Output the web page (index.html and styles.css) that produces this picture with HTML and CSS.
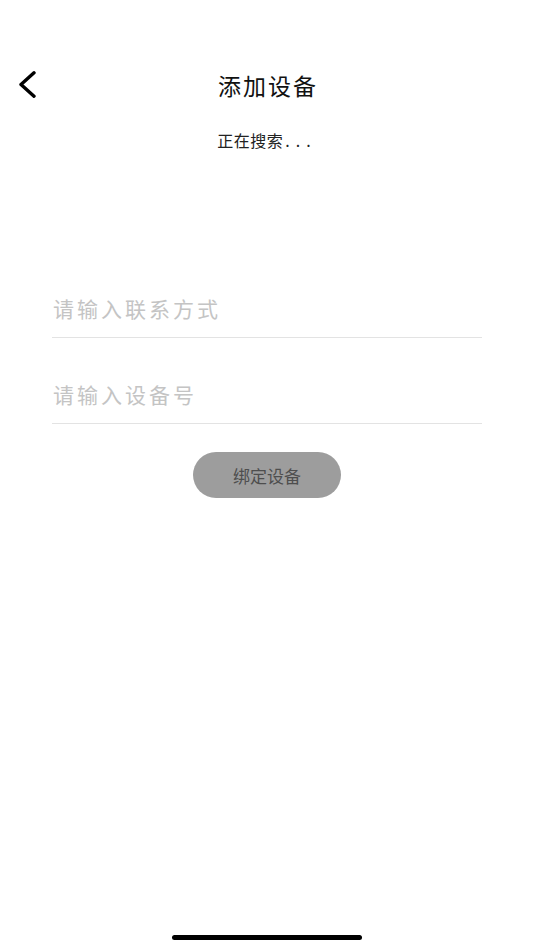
FILE: index.html
```html
<!DOCTYPE html>
<html lang="zh-CN">
<head>
    <meta charset="UTF-8">
    <meta name="viewport" content="width=device-width, initial-scale=1.0">
    <title>添加设备</title>
    <link rel="stylesheet" href="styles.css">
</head>
<body>
    <div class="page">
        <div class="nav-bar">
            <button class="back-btn" aria-label="返回">
                <svg width="22" height="27" viewBox="0 0 22 27">
                    <path d="M18 1.8 L5 13.5 L18 25.2" fill="none" stroke="#000" stroke-width="3.4" stroke-linecap="round" stroke-linejoin="round"/>
                </svg>
            </button>
            <h1 class="nav-title">添加设备</h1>
        </div>

        <div class="search-status">正在搜索<span class="dots">...</span></div>

        <div class="form">
            <div class="form-row">
                <input type="text" id="contact" placeholder="请输入联系方式">
            </div>
            <div class="form-row">
                <input type="text" id="device_no" placeholder="请输入设备号">
            </div>
            <button class="bind-btn" onclick="bindDevice()">绑定设备</button>
        </div>

        <div class="home-indicator"></div>
    </div>

    <script>
        function bindDevice() {
            const contact = document.getElementById('contact').value;
            const deviceNo = document.getElementById('device_no').value;
            if (!contact || !deviceNo) return;
            console.log('bind', contact, deviceNo);
        }
    </script>
</body>
</html>
```

FILE: styles.css
```css
body {
    font-family: "Noto Sans CJK SC", "Noto Sans", sans-serif;
    background-color: #fff;
    margin: 0;
    padding: 0;
}

.page {
    height: 950px;
    display: flex;
    flex-direction: column;
    padding-top: 60px;
    box-sizing: border-box;
}

.nav-bar {
    position: relative;
    height: 50px;
    display: flex;
    align-items: center;
    justify-content: center;
}

.back-btn {
    position: absolute;
    left: 16px;
    top: 11px;
    padding: 0;
    margin: 0;
    border: none;
    background: none;
    cursor: pointer;
    line-height: 0;
}

.nav-title {
    margin: 0 0 0 2px;
    font-size: 23px;
    font-weight: normal;
    letter-spacing: 2px;
    color: #111;
}

.search-status {
    margin-top: 18px;
    text-align: center;
    font-size: 16px;
    letter-spacing: 0.5px;
    color: #222;
}

.search-status .dots {
    letter-spacing: 6px;
    margin-left: 2px;
}

.form {
    margin-top: 128px;
    padding: 0 52px;
    display: flex;
    flex-direction: column;
}

.form-row {
    height: 85px;
    display: flex;
    align-items: flex-end;
    border-bottom: 1px solid #e3e3e3;
}

.form-row:first-child {
    height: 57px;
}

.form-row input {
    width: 100%;
    height: 40px;
    margin-bottom: 9px;
    padding: 0 1px;
    border: none;
    outline: none;
    background: transparent;
    font-family: inherit;
    font-size: 21px;
    letter-spacing: 3px;
    color: #333;
}

.form-row input::placeholder {
    color: #c4c4c4;
}

.bind-btn {
    align-self: center;
    width: 148px;
    height: 46px;
    margin-top: 28px;
    border: none;
    border-radius: 23px;
    background-color: #9d9d9d;
    color: #4e4e4e;
    font-family: inherit;
    font-size: 17px;
    cursor: pointer;
}

.home-indicator {
    margin: auto auto 10px;
    width: 190px;
    height: 5px;
    border-radius: 3px;
    background-color: #000;
}
```
